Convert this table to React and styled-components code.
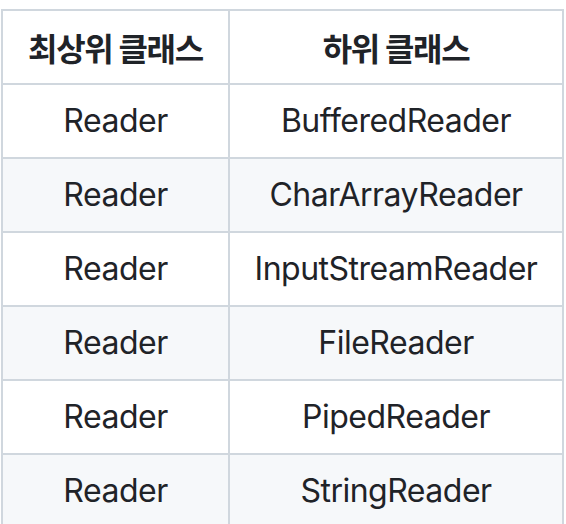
import React from 'react'
import styled, { createGlobalStyle } from 'styled-components'

const rows = [
  ['Reader', 'BufferedReader'],
  ['Reader', 'CharArrayReader'],
  ['Reader', 'InputStreamReader'],
  ['Reader', 'FileReader'],
  ['Reader', 'PipedReader'],
  ['Reader', 'StringReader'],
]

const GlobalStyle = createGlobalStyle`
  body {
    margin: 0;
    background: #ffffff;
    font-family: Inter, "Noto Sans CJK KR", sans-serif;
    color: #1f2328;
  }
`

const Page = styled.div`
  padding: 9px 0 0 1px;
`

const Table = styled.table`
  border-collapse: separate;
  border-spacing: 0;
  border-top: 2px solid #d0d7de;
  border-left: 2px solid #d0d7de;
  table-layout: fixed;
  width: 563px;
`

const Row = styled.tr`
  background: ${p => (p.$striped ? '#f6f8fa' : '#ffffff')};
`

const HeadCell = styled.th`
  padding: 12px 0;
  border-right: 2px solid #d0d7de;
  border-bottom: 2px solid #d0d7de;
  font-size: 32px;
  line-height: 48px;
  font-weight: 700;
  font-family: "Noto Sans CJK KR", sans-serif;
  letter-spacing: -1.3px;
  text-align: center;
  width: ${p => p.$width}px;
`

const Cell = styled.td`
  padding: 12px 0;
  border-right: 2px solid #d0d7de;
  border-bottom: 2px solid #d0d7de;
  font-size: 32px;
  line-height: 48px;
  letter-spacing: -0.5px;
  text-align: center;
  white-space: nowrap;
`

export default function App() {
  return (
    <Page>
      <GlobalStyle />
      <Table>
        <thead>
          <Row>
            <HeadCell $width={225}>최상위 클래스</HeadCell>
            <HeadCell $width={332}>하위 클래스</HeadCell>
          </Row>
        </thead>
        <tbody>
          {rows.map(([parent, child], i) => (
            <Row key={child} $striped={i % 2 === 1}>
              <Cell>{parent}</Cell>
              <Cell>{child}</Cell>
            </Row>
          ))}
        </tbody>
      </Table>
    </Page>
  )
}
